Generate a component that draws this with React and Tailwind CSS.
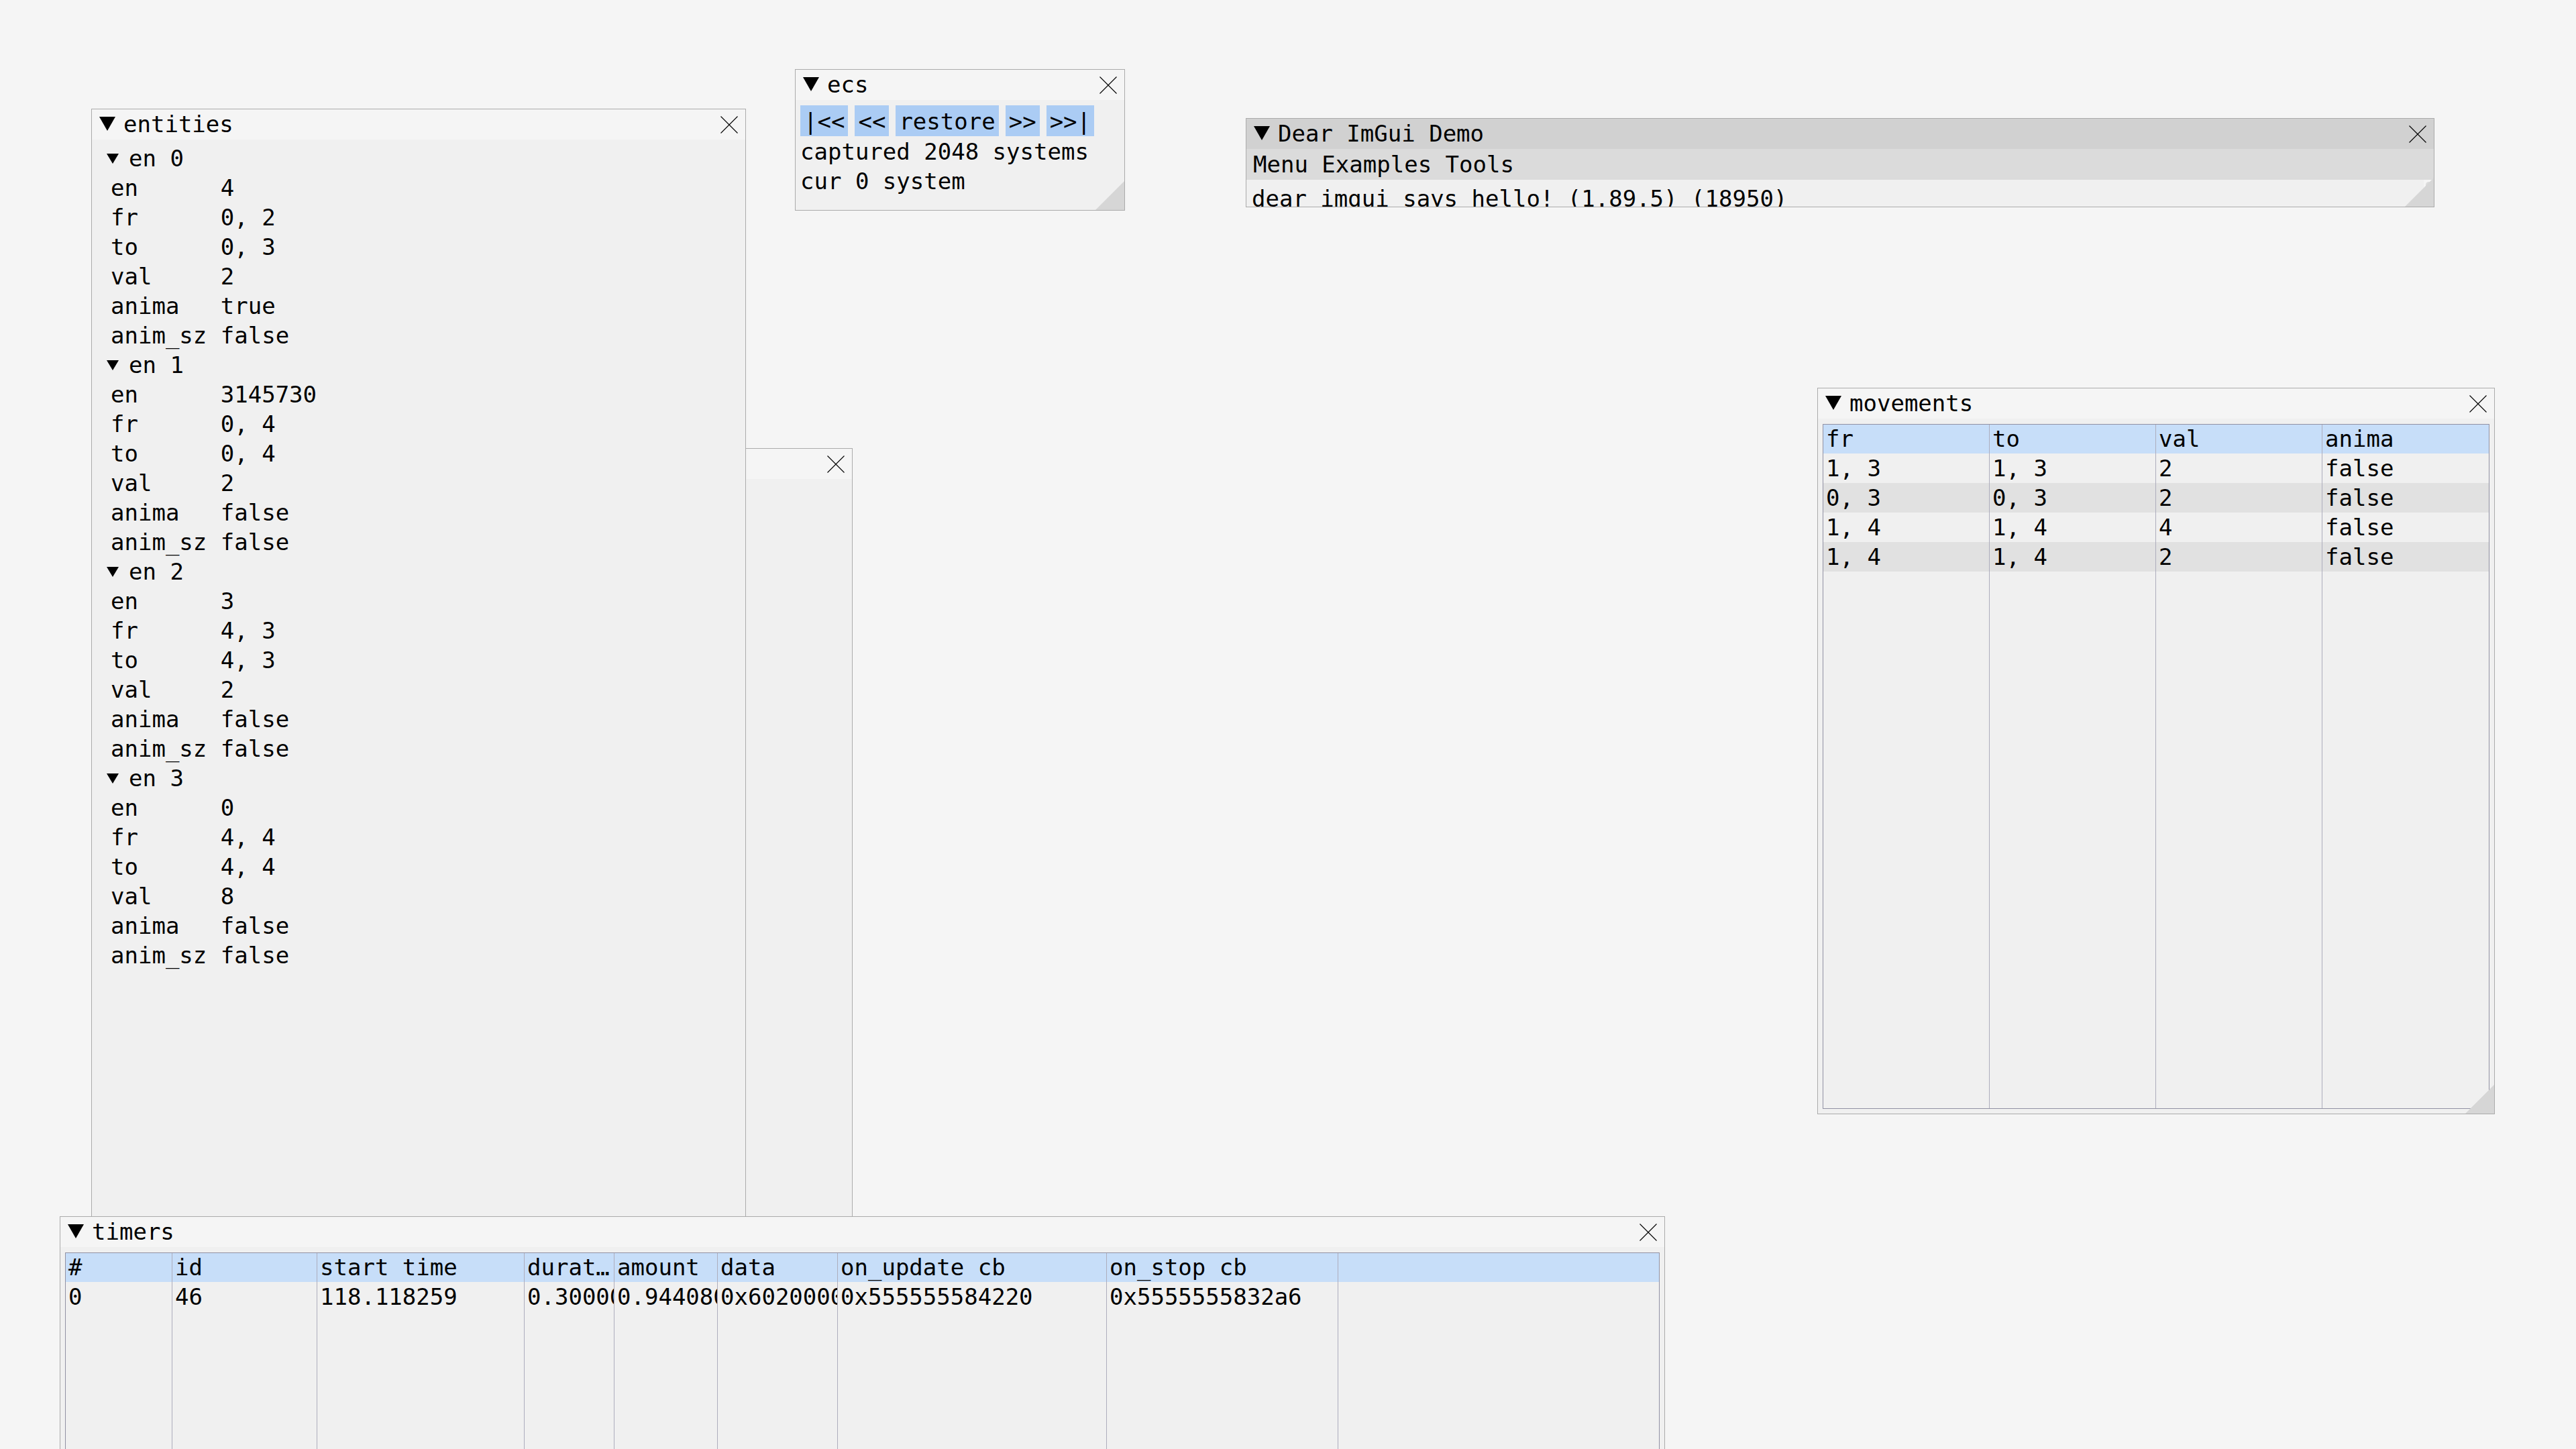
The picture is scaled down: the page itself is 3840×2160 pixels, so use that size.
import React from "react";

function TitleArrow({ className = "" }) {
  return (
    <svg width="24" height="21" viewBox="0 0 24 21" className={`shrink-0 ${className}`}>
      <polygon points="0,0 24,0 12,21" fill="#000" />
    </svg>
  );
}

function TreeArrow({ className = "" }) {
  return (
    <svg width="18" height="15" viewBox="0 0 18 15" className={`shrink-0 ${className}`}>
      <polygon points="0,0 18,0 9,15" fill="#000" />
    </svg>
  );
}

function CloseX({ className = "" }) {
  return (
    <svg width="26" height="26" viewBox="0 0 26 26" className={`shrink-0 ${className}`}>
      <path d="M0.5 0.5 L25.5 25.5 M25.5 0.5 L0.5 25.5" stroke="#000" strokeWidth="1.1" fill="none" />
    </svg>
  );
}

function Grip() {
  return (
    <svg width="43" height="43" viewBox="0 0 43 43" className="absolute right-0 bottom-0">
      <polygon points="43,0 43,43 0,43" fill="#d6d6d6" />
    </svg>
  );
}

function TitleBar({ title, bg }) {
  return (
    <div className={`h-[45px] flex items-start shrink-0 ${bg}`}>
      <TitleArrow className="ml-[11px] mt-[11px]" />
      <span className="ml-[12px] leading-[45px] whitespace-pre">{title}</span>
      <CloseX className="ml-auto mr-[11px] self-center" />
    </div>
  );
}

function Win({ pos, title, titleBg = "bg-[#f5f5f5]", grip = false, children }) {
  return (
    <div className={`absolute border border-[#ababab] bg-[#f0f0f0] flex flex-col overflow-hidden ${pos}`}>
      <TitleBar title={title} bg={titleBg} />
      {children}
      {grip && <Grip />}
    </div>
  );
}

const entities = [
  { name: "en 0", rows: [["en", "4"], ["fr", "0, 2"], ["to", "0, 3"], ["val", "2"], ["anima", "true"], ["anim_sz", "false"]] },
  { name: "en 1", rows: [["en", "3145730"], ["fr", "0, 4"], ["to", "0, 4"], ["val", "2"], ["anima", "false"], ["anim_sz", "false"]] },
  { name: "en 2", rows: [["en", "3"], ["fr", "4, 3"], ["to", "4, 3"], ["val", "2"], ["anima", "false"], ["anim_sz", "false"]] },
  { name: "en 3", rows: [["en", "0"], ["fr", "4, 4"], ["to", "4, 4"], ["val", "8"], ["anima", "false"], ["anim_sz", "false"]] },
];

const movCols = [
  { h: "fr", v: ["1, 3", "0, 3", "1, 4", "1, 4"] },
  { h: "to", v: ["1, 3", "0, 3", "1, 4", "1, 4"] },
  { h: "val", v: ["2", "2", "4", "2"] },
  { h: "anima", v: ["false", "false", "false", "false"] },
];

const timerCols = [
  { h: "#", v: "0" },
  { h: "id", v: "46" },
  { h: "start time", v: "118.118259" },
  { h: "durat\u2026", v: "0.300000" },
  { h: "amount", v: "0.944080" },
  { h: "data", v: "0x6020000000d0" },
  { h: "on_update cb", v: "0x555555584220" },
  { h: "on_stop cb", v: "0x5555555832a6" },
  { h: "", v: "" },
];

export default function App() {
  return (
    <div className="relative w-[3840px] h-[2160px] overflow-hidden bg-[#f5f5f5] text-black text-[34px] font-['DejaVu_Sans_Mono',monospace]">
      {/* window partly hidden behind entities */}
      <Win pos="left-[640px] top-[668px] w-[631px] h-[1300px]" title="" />

      {/* entities */}
      <Win pos="left-[136px] top-[162px] w-[976px] h-[1700px]" title="entities">
        <div className="flex flex-col pt-[6px]">
          {entities.map((e) => (
            <React.Fragment key={e.name}>
              <div className="h-[44px] flex items-center">
                <TreeArrow className="ml-[22px]" />
                <span className="ml-[15px] leading-[44px] whitespace-pre">{e.name}</span>
              </div>
              {e.rows.map(([k, v]) => (
                <div key={k} className="h-[44px] leading-[44px] pl-[28px] whitespace-pre">
                  {k.padEnd(8, " ") + v}
                </div>
              ))}
            </React.Fragment>
          ))}
        </div>
      </Win>

      {/* ecs */}
      <Win pos="left-[1185px] top-[103px] w-[492px] h-[211px]" title="ecs" grip>
        <div className="flex flex-col pt-[8px] pl-[7px]">
          <div className="flex gap-[10px]">
            {["|<<", "<<", "restore", ">>", ">>|"].map((b) => (
              <div key={b} className="h-[46px] px-[5px] leading-[48px] bg-[#abccf4] whitespace-pre overflow-hidden">
                {b}
              </div>
            ))}
          </div>
          <div className="mt-[1px] h-[44px] leading-[44px] whitespace-pre">captured 2048 systems</div>
          <div className="h-[44px] leading-[44px] whitespace-pre">cur 0 system</div>
        </div>
      </Win>

      {/* Dear ImGui Demo */}
      <Win pos="left-[1857px] top-[176px] w-[1772px] h-[133px]" title="Dear ImGui Demo" titleBg="bg-[#d1d1d1]" grip>
        <div className="h-[46px] shrink-0 bg-[#dbdbdb] leading-[46px] pl-[10px] whitespace-pre">Menu Examples Tools</div>
        <div className="relative flex-1 overflow-hidden">
          <div className="pt-[6px] pl-[8px] h-[44px] leading-[44px] whitespace-pre box-content">
            dear imgui says hello! (1.89.5) (18950)
          </div>
          <div className="absolute right-0 top-0 bottom-0 w-[15px] bg-[#f5f5f5]">
            <div className="absolute top-[3px] left-[3px] w-[9px] h-[12px] rounded-full bg-[#dcdcdc]" />
          </div>
        </div>
      </Win>

      {/* movements */}
      <Win pos="left-[2709px] top-[578px] w-[1010px] h-[1083px]" title="movements" grip>
        <div className="flex-1 mt-[8px] mx-[7px] mb-[7px] border border-[#9191a3] grid grid-cols-[247px_248px_248px_249px]">
          {movCols.map((c, ci) => (
            <div key={c.h} className={ci === 0 ? "flex flex-col" : "flex flex-col border-l border-[#adadbd]"}>
              <div className="h-[43px] leading-[43px] pl-[4px] bg-[#c7def9] whitespace-pre">{c.h}</div>
              {c.v.map((v, ri) => (
                <div
                  key={ri}
                  className={ri % 2 === 1 ? "h-[44px] leading-[44px] pl-[4px] bg-[#e1e1e1] whitespace-pre" : "h-[44px] leading-[44px] pl-[4px] whitespace-pre"}
                >
                  {v}
                </div>
              ))}
            </div>
          ))}
        </div>
      </Win>

      {/* timers */}
      <Win pos="left-[89px] top-[1813px] w-[2393px] h-[400px]" title="timers">
        <div className="flex-1 mt-[8px] mx-[7px] border border-[#9191a3] grid grid-cols-[158px_216px_309px_134px_154px_179px_401px_345px_479px]">
          {timerCols.map((c, ci) => (
            <div key={ci} className={ci === 0 ? "flex flex-col min-w-0" : "flex flex-col min-w-0 border-l border-[#adadbd]"}>
              <div className="h-[43px] leading-[43px] pl-[4px] bg-[#c7def9] whitespace-pre overflow-hidden">{c.h}</div>
              <div className="h-[44px] leading-[44px] pl-[4px] whitespace-pre overflow-hidden">{c.v}</div>
            </div>
          ))}
        </div>
      </Win>
    </div>
  );
}
